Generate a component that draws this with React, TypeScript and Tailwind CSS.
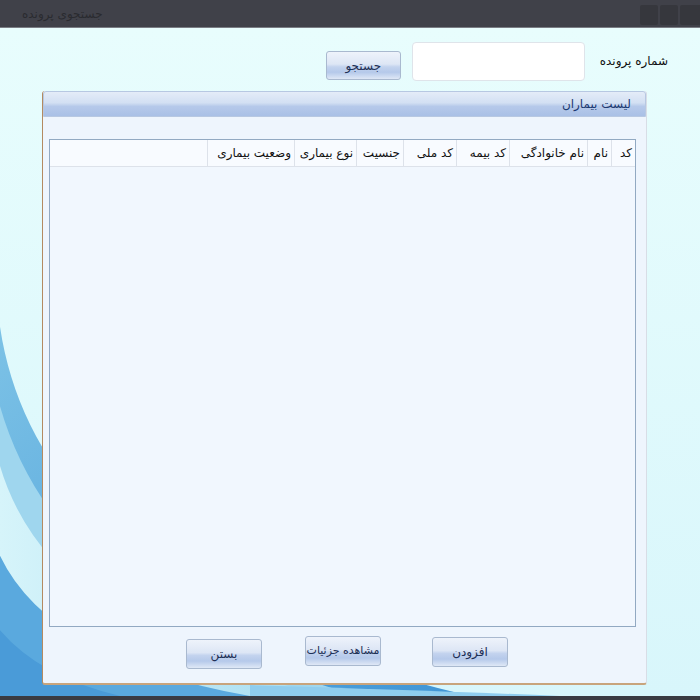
import React from "react";

const font = { fontFamily: '"DejaVu Sans", Tahoma, sans-serif' };

const columns = [
  { title: "کد", w: "w-[24px]" },
  { title: "نام", w: "w-[24px]" },
  { title: "نام خانوادگی", w: "w-[78px]" },
  { title: "کد بیمه", w: "w-[53px]" },
  { title: "کد ملی", w: "w-[53px]" },
  { title: "جنسیت", w: "w-[47px]" },
  { title: "نوع بیماری", w: "w-[62px]" },
  { title: "وضعیت بیماری", w: "w-[87px]" },
];

function Backdrop() {
  return (
    <svg
      className="absolute inset-0 h-full w-full"
      viewBox="0 0 700 671"
      preserveAspectRatio="none"
    >
      <defs>
        <linearGradient id="sky" x1="0" y1="0" x2="0" y2="1">
          <stop offset="0" stopColor="#e8fdfd" />
          <stop offset="1" stopColor="#d8f6fb" />
        </linearGradient>
        <linearGradient id="blue1" x1="0" y1="0" x2="1" y2="1">
          <stop offset="0" stopColor="#7cc2e6" />
          <stop offset="1" stopColor="#3f95d6" />
        </linearGradient>
        <linearGradient id="light1" x1="0" y1="0" x2="1" y2="0">
          <stop offset="0" stopColor="#d6f4fa" />
          <stop offset="1" stopColor="#a6dcf0" />
        </linearGradient>
      </defs>
      <rect width="700" height="671" fill="url(#sky)" />
      <path d="M0,300 Q40,570 470,671 L0,671 Z" fill="url(#blue1)" />
      <path d="M0,380 Q60,590 360,671 L0,671 Z" fill="#9fd6ee" />
      <path d="M0,440 Q50,610 330,671 L0,671 Z" fill="url(#light1)" />
      <path d="M0,530 Q50,635 250,671 L0,671 Z" fill="#5aa9de" />
      <path d="M0,605 Q40,652 120,671 L0,671 Z" fill="#4a9bd8" />
      <path d="M250,660 Q420,665 560,671 L250,671 Z" fill="#8fcdee" />
    </svg>
  );
}

function WinButton({ label, className }: { label: string; className?: string }) {
  return (
    <button
      className={`h-[30px] w-[76px] rounded-[3px] border border-[#a9b9cf] bg-[linear-gradient(#eef3fb_0%,#dde6f5_45%,#c3d3ee_55%,#b5c9ea_75%,#dfe8f6_100%)] text-[12px] text-[#1d2f55] whitespace-nowrap overflow-hidden ${className ?? ""}`}
    >
      {label}
    </button>
  );
}

export default function App() {
  return (
    <div
      className="flex h-[700px] w-[700px] flex-col overflow-hidden bg-[#3a3b42]"
      style={font}
    >
      {/* title bar */}
      <div className="flex h-[28px] items-center justify-between border-b border-[#7a7d84] bg-[#404149] pl-[22px]">
        <span className="text-[12px] text-[#2a2b30]">جستجوی پرونده</span>
        <div className="flex gap-[2px] self-start pt-[5px]">
          <div className="h-[20px] w-[18px] rounded-[2px] bg-[#36373d]" />
          <div className="h-[20px] w-[18px] rounded-[2px] bg-[#36373d]" />
          <div className="h-[20px] w-[20px] rounded-l-[2px] bg-[#36373d]" />
        </div>
      </div>

      {/* client area */}
      <div className="relative h-[668px]">
        <Backdrop />
        <div className="relative flex flex-col">
          {/* search row */}
          <div dir="rtl" className="flex items-start pr-[32px] pt-[14px]">
            <span className="mt-[10px] text-[12px] text-[#111]">شماره پرونده</span>
            <input
              className="mr-[15px] h-[39px] w-[173px] rounded-[4px] border border-[#dfe4ea] bg-white outline-none"
            />
            <WinButton label="جستجو" className="mr-[11px] mt-[9px] !h-[29px] !w-[75px]" />
          </div>

          {/* patients panel */}
          <div className="ml-[42px] mt-[10px] flex h-[594px] w-[605px] flex-col rounded-[3px] border-b-2 border-l border-r border-b-[#c8a47c] border-l-[#b48a60] border-r-[#d8dde6] bg-[#eef5fd]">
            <div
              dir="rtl"
              className="flex h-[26px] items-center rounded-t-[3px] border border-[#b7c8e2] bg-[linear-gradient(#e4ecf8_0%,#d3e0f3_45%,#b6c9ea_60%,#a9c0e6_100%)] pr-[14px]"
            >
              <span className="text-[12px] text-[#1d3a72]">لیست بیماران</span>
            </div>

            <div dir="rtl" className="mr-[10px] ml-[6px] mt-[22px] flex h-[488px] flex-col border border-[#92a9c2] bg-[#f1f7fe]">
              <div className="flex h-[27px] border-b border-[#dde2ea] bg-[#f8fbff]">
                {columns.map((c) => (
                  <div
                    key={c.title}
                    className={`${c.w} flex items-center border-l border-[#dde2ea] pr-[3px] text-[12px] text-[#111] whitespace-nowrap`}
                  >
                    {c.title}
                  </div>
                ))}
              </div>
            </div>

            <div dir="rtl" className="flex items-start pr-[138px] pt-[9px]">
              <WinButton label="افزودن" className="mt-[1px]" />
              <WinButton label="مشاهده جزئیات" className="mr-[51px] !text-[11px] !px-0" />
              <WinButton label="بستن" className="mr-[43px] mt-[3px]" />
            </div>
          </div>
        </div>
      </div>
      <div className="h-[3px] bg-[#3a3b42]" />
    </div>
  );
}
